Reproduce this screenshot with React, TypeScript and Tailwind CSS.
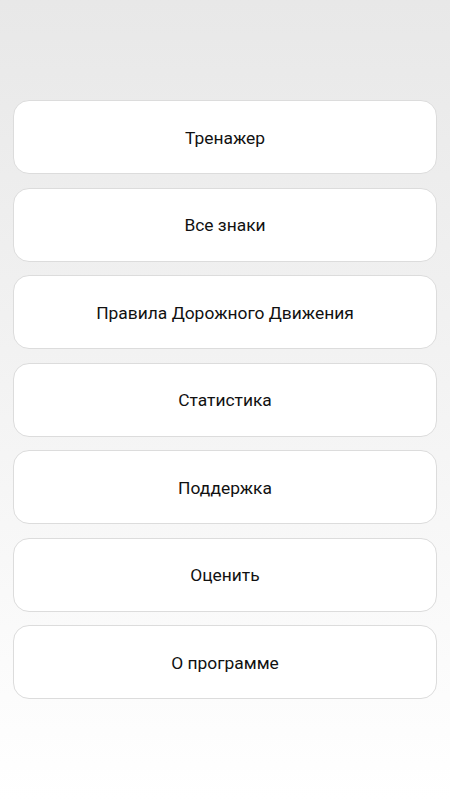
import React from 'react';

const items = [
  'Тренажер',
  'Все знаки',
  'Правила Дорожного Движения',
  'Статистика',
  'Поддержка',
  'Оценить',
  'О программе',
];

const App = () => {
  return (
    <div
      className="min-h-[800px] w-full bg-gradient-to-b from-[#e8e8e8] to-white pt-[100px] px-[13px]"
      style={{ fontFamily: 'Roboto, "Noto Sans", sans-serif' }}
    >
      <div className="flex flex-col gap-[13.5px]">
        {items.map((label) => (
          <button
            key={label}
            className="h-[74px] w-full rounded-[16px] border border-[#dcdcdc] bg-white pt-[2px] text-[17.4px] text-[#111]"
          >
            {label}
          </button>
        ))}
      </div>
    </div>
  );
};

export default App;
